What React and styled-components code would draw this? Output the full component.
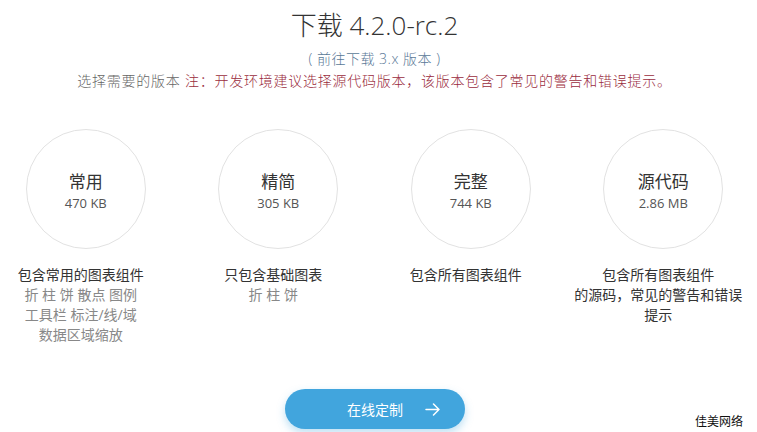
import React from "react"
import styled, { createGlobalStyle } from "styled-components"

const GlobalStyle = createGlobalStyle`
  html, body {
    margin: 0;
    padding: 0;
    background: #fff;
  }
  body {
    font-family: "Open Sans", "Noto Sans CJK SC", sans-serif;
    color: #333;
  }
`

const Page = styled.div`
  position: relative;
  width: 757px;
  height: 432px;
  padding-right: 8px;
  box-sizing: border-box;
  overflow: hidden;
`

const Header = styled.div`
  display: flex;
  flex-direction: column;
  align-items: center;
  padding-top: 6px;
`

const Title = styled.h1`
  margin: 0;
  font-size: 26px;
  font-weight: 300;
  line-height: 38px;
  color: #333;
`

const Sub = styled.a`
  margin-top: 5px;
  font-size: 14px;
  line-height: 20px;
  letter-spacing: 0.5px;
  color: #5a7997;
  font-weight: 300;
`

const Note = styled.p`
  margin: 2px 0 0;
  font-size: 14px;
  line-height: 20px;
  letter-spacing: 0.75px;
  color: #666;
  font-weight: 300;
`

const Warn = styled.span`
  color: #9a2c3d;
`

const Grid = styled.div`
  display: grid;
  grid-template-columns: repeat(4, 192.5px);
  justify-content: center;
  margin: 38px -20px 0;
`

const Col = styled.div`
  display: flex;
  flex-direction: column;
  align-items: center;
`

const Circle = styled.div`
  width: 120px;
  height: 120px;
  box-sizing: border-box;
  border: 1px solid #e2e2e2;
  border-radius: 50%;
  display: flex;
  flex-direction: column;
  align-items: center;
  justify-content: center;
  padding-top: 3px;
`

const Name = styled.div`
  font-size: 17px;
  line-height: 24px;
  color: #333;
`

const Size = styled.div`
  font-size: 13px;
  line-height: 18px;
  color: #555;
`

const Desc = styled.div`
  margin-top: 16px;
  padding-right: 10px;
  text-align: center;
  font-size: 14px;
  line-height: 20px;
  color: #333;
`

const Extra = styled.div`
  color: #888;
`

const Actions = styled.div`
  display: flex;
  justify-content: center;
  position: absolute;
  left: 0;
  right: 8px;
  top: 389px;
`

const Button = styled.button`
  width: 180px;
  height: 40px;
  border: none;
  border-radius: 20px;
  background: #41a5dd;
  color: #fff;
  font-family: "Noto Sans CJK SC", sans-serif;
  font-size: 14px;
  display: flex;
  align-items: center;
  justify-content: center;
  gap: 22px;
  padding: 0 0 0 38px;
  box-shadow: 0 4px 8px rgba(65, 165, 221, 0.35);
`

const Watermark = styled.div`
  position: absolute;
  right: 14px;
  bottom: 3px;
  font-family: "Noto Sans CJK SC", sans-serif;
  font-size: 12px;
  color: #111;
  background: rgba(255, 255, 255, 0.85);
`

const builds = [
  { name: "常用", size: "470 KB", main: ["包含常用的图表组件"], extra: ["折 柱 饼 散点 图例", "工具栏 标注/线/域", "数据区域缩放"] },
  { name: "精简", size: "305 KB", main: ["只包含基础图表"], extra: ["折 柱 饼"] },
  { name: "完整", size: "744 KB", main: ["包含所有图表组件"], extra: [] },
  { name: "源代码", size: "2.86 MB", main: ["包含所有图表组件", "的源码，常见的警告和错误", "提示"], extra: [] },
]

const Arrow = () => (
  <svg width="15" height="13" viewBox="0 0 15 13" fill="none" stroke="#fff" strokeWidth="1.5" strokeLinecap="round" strokeLinejoin="round">
    <path d="M1 6.5h13M8.5 1l5.5 5.5-5.5 5.5" />
  </svg>
)

export default function App() {
  return (
    <Page>
      <GlobalStyle />
      <Header>
        <Title>下载 4.2.0-rc.2</Title>
        <Sub>( 前往下载 3.x 版本 )</Sub>
        <Note>
          选择需要的版本 <Warn>注：开发环境建议选择源代码版本，该版本包含了常见的警告和错误提示。</Warn>
        </Note>
      </Header>
      <Grid>
        {builds.map((b) => (
          <Col key={b.name}>
            <Circle>
              <Name>{b.name}</Name>
              <Size>{b.size}</Size>
            </Circle>
            <Desc>
              {b.main.map((l) => (
                <div key={l}>{l}</div>
              ))}
              {b.extra.map((l) => (
                <Extra key={l}>{l}</Extra>
              ))}
            </Desc>
          </Col>
        ))}
      </Grid>
      <Actions>
        <Button>
          <span>在线定制</span>
          <Arrow />
        </Button>
      </Actions>
      <Watermark>佳美网络</Watermark>
    </Page>
  )
}
